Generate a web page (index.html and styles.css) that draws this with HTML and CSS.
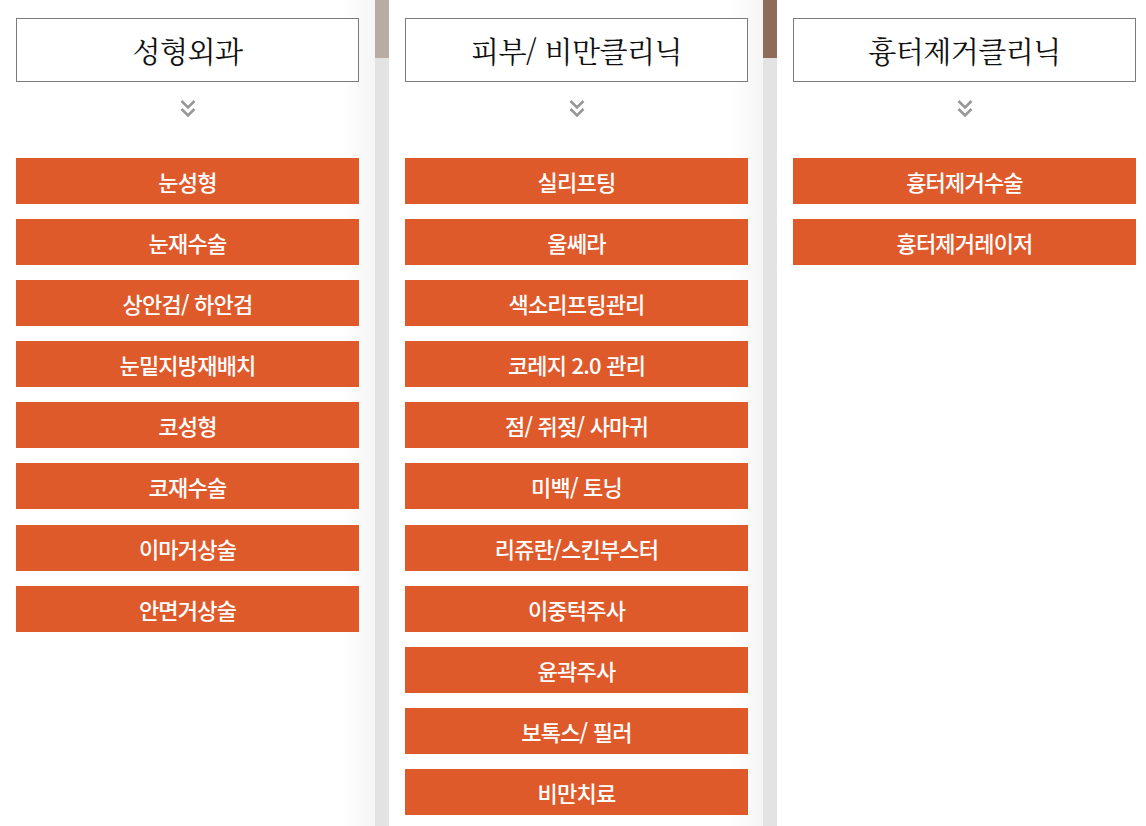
FILE: index.html
```html
<!DOCTYPE html>
<html lang="ko">
<head>
    <meta charset="UTF-8">
    <meta name="viewport" content="width=device-width, initial-scale=1.0">
    <title>진료과목</title>
    <link rel="stylesheet" href="styles.css">
</head>
<body>
    <div class="wrap">
        <div class="col">
            <h2 class="title">성형외과</h2>
            <div class="arrow">
                <svg width="16" height="22" viewBox="0 0 16 22"><polyline points="1.5,3 8,9.5 14.5,3" /><polyline points="1.5,11 8,17.5 14.5,11" /></svg>
            </div>
            <ul class="menu">
                <li>눈성형</li>
                <li>눈재수술</li>
                <li>상안검/ 하안검</li>
                <li>눈밑지방재배치</li>
                <li>코성형</li>
                <li>코재수술</li>
                <li>이마거상술</li>
                <li>안면거상술</li>
            </ul>
        </div>
        <div class="divider light"></div>
        <div class="col mid">
            <h2 class="title">피부/ 비만클리닉</h2>
            <div class="arrow">
                <svg width="16" height="22" viewBox="0 0 16 22"><polyline points="1.5,3 8,9.5 14.5,3" /><polyline points="1.5,11 8,17.5 14.5,11" /></svg>
            </div>
            <ul class="menu">
                <li>실리프팅</li>
                <li>울쎄라</li>
                <li>색소리프팅관리</li>
                <li>코레지 2.0 관리</li>
                <li>점/ 쥐젖/ 사마귀</li>
                <li>미백/ 토닝</li>
                <li>리쥬란/스킨부스터</li>
                <li>이중턱주사</li>
                <li>윤곽주사</li>
                <li>보톡스/ 필러</li>
                <li>비만치료</li>
            </ul>
        </div>
        <div class="divider dark"></div>
        <div class="col last">
            <h2 class="title">흉터제거클리닉</h2>
            <div class="arrow">
                <svg width="16" height="22" viewBox="0 0 16 22"><polyline points="1.5,3 8,9.5 14.5,3" /><polyline points="1.5,11 8,17.5 14.5,11" /></svg>
            </div>
            <ul class="menu">
                <li>흉터제거수술</li>
                <li>흉터제거레이저</li>
            </ul>
        </div>
    </div>
</body>
</html>
```

FILE: styles.css
```css
body {
    margin: 0;
    padding: 0;
    background-color: #fff;
    font-family: "Noto Sans CJK KR", "Noto Sans", sans-serif;
    overflow: hidden;
}

.wrap {
    display: flex;
    height: 826px;
}

.col {
    flex: none;
    width: 375px;
    box-sizing: border-box;
    padding: 18px 17px 0 16px;
    background: linear-gradient(to right, #fff calc(100% - 34px), #f5f5f5);
}

.col.mid {
    width: 374px;
}

.col.last {
    width: 369px;
    padding-right: 0;
    background: #fff;
}

.title {
    margin: 0;
    width: 343px;
    height: 64px;
    box-sizing: border-box;
    border: 1px solid #7b7b7b;
    background: #fff;
    display: flex;
    align-items: center;
    justify-content: center;
    font-family: "Noto Serif CJK KR", "Noto Sans CJK KR", serif;
    font-size: 29px;
    font-weight: 400;
    color: #111;
    letter-spacing: -0.5px;
}

.arrow {
    width: 343px;
    height: 76px;
    box-sizing: border-box;
    padding-top: 16px;
    display: flex;
    justify-content: center;
    align-items: flex-start;
}

.arrow polyline {
    fill: none;
    stroke: #979797;
    stroke-width: 2.6;
}

.menu {
    list-style: none;
    margin: 0;
    padding: 0;
    width: 343px;
    display: flex;
    flex-direction: column;
    gap: 15.1px;
}

.menu li {
    height: 46px;
    background-color: #df5a2b;
    color: #fff;
    font-size: 22px;
    font-weight: 500;
    display: flex;
    align-items: center;
    justify-content: center;
    letter-spacing: -0.8px;
}

.divider {
    flex: none;
    width: 14px;
    background-color: #e3e3e3;
}

.divider::before {
    content: "";
    display: block;
    height: 58px;
}

.divider.light::before {
    background-color: #b9aca4;
}

.divider.dark::before {
    background-color: #8f6c59;
}
```
